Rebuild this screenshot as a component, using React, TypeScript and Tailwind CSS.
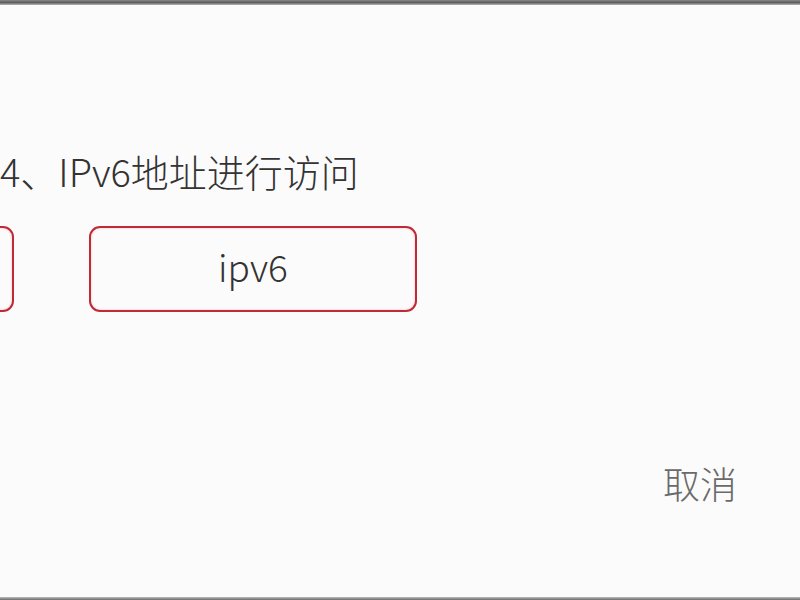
import React from 'react';

const font = { fontFamily: '"Noto Sans CJK SC", "Noto Sans", sans-serif' };

const App: React.FC = () => {
  return (
    <div className="w-[800px] h-[600px] flex flex-col bg-[#fcfbfc] overflow-hidden" style={font}>
      {/* top edge */}
      <div className="h-[5px] bg-gradient-to-b from-[#8a8a8a] via-[#5e5e5e] to-[#b8b8b8]" />

      <div className="flex-1 flex flex-col">
        <p className="mt-[143px] text-[38px] leading-[45px] font-light text-[#333] whitespace-nowrap">
          4、IPv6地址进行访问
        </p>

        <div className="mt-[33px] flex gap-[75px]">
          <div className="ml-[-314px] w-[328px] h-[86px] shrink-0 rounded-[11px] border-2 border-[#bf2a37] shadow-[inset_0_0_3px_#f3c4c8]" />
          <div className="w-[328px] h-[86px] shrink-0 rounded-[11px] border-2 border-[#bf2a37] shadow-[inset_0_0_3px_#f3c4c8] flex items-center justify-center text-[37px] font-light text-[#333] pb-[4px]">
            ipv6
          </div>
        </div>

        <div className="mt-[150px] flex justify-end pr-[63px]">
          <span className="text-[37px] leading-[43px] font-light text-[#6a6a6a]">取消</span>
        </div>
      </div>

      {/* bottom edge */}
      <div className="h-[3px] bg-gradient-to-b from-[#bdbdbd] to-[#6a6a6a]" />
    </div>
  );
};

export default App;
